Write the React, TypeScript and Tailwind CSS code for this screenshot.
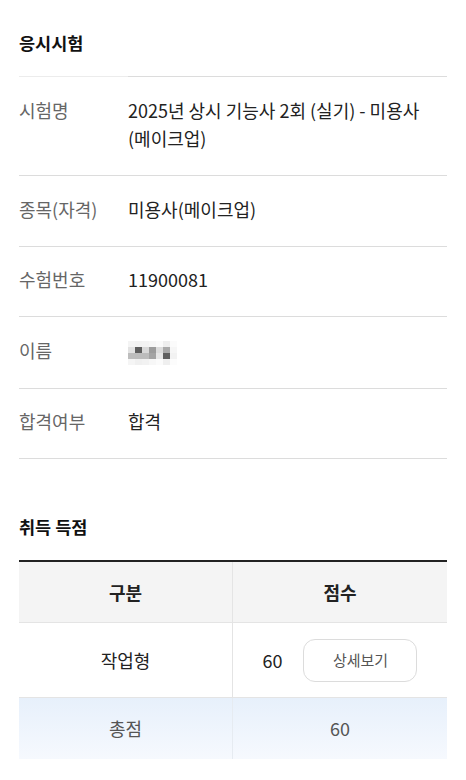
const font = { fontFamily: '"Noto Sans CJK KR", "Noto Sans", sans-serif' }

const rows: { label: string; value: React.ReactNode }[] = [
  { label: '시험명', value: '2025년 상시 기능사 2회 (실기) - 미용사(메이크업)' },
  { label: '종목(자격)', value: '미용사(메이크업)' },
  { label: '수험번호', value: '11900081' },
  { label: '이름', value: <BlurName /> },
  { label: '합격여부', value: '합격' },
]

function BlurName() {
  // pixelated (mosaic) name
  const cells = [
    ['#f4f4f4', '#f2f2f2', '#f3f3f3', '#f6f6f6', '#fafafa', '#eeeeee', '#fbfbfb'],
    ['#e2e2e2', '#5e5e5e', '#d8d8d8', '#9c9c9c', '#dcdcdc', '#a9a9a9', '#f6f6f6'],
    ['#bdbdbd', '#bcbcbc', '#bcbcbc', '#a4a4a4', '#e6e6e6', '#5f5f5f', '#f2f2f2'],
    ['#f5f5f5', '#f0f0f0', '#f2f2f2', '#f7f7f7', '#fbfbfb', '#efefef', '#fcfcfc'],
  ]
  return (
    <span className="inline-flex flex-col align-middle">
      {cells.map((r, i) => (
        <span key={i} className="flex">
          {r.map((c, j) => (
            <span key={j} className="w-[7px] h-[6px]" style={{ backgroundColor: c }} />
          ))}
        </span>
      ))}
    </span>
  )
}

export default function App() {
  return (
    <div className="min-h-screen bg-white px-[19px] pt-[31px] pb-5" style={font}>
      <h2 className="text-[17.5px] leading-6 font-bold text-[#111]">응시시험</h2>

      <div className="mt-[21px] flex">
        <div className="w-[109px] h-px bg-[#ececec]" />
        <div className="flex-1 h-px bg-[#dcdcdc]" />
      </div>
      {rows.map((r, i) => (
        <div
          key={r.label}
          className={
            'flex pb-[23px] border-b border-[#dcdcdc] text-[18px] leading-[28px] ' +
            (i === 0 ? 'pt-[19px]' : 'pt-[18.5px]')
          }
        >
          <div className="w-[109px] shrink-0 text-[#666]">{r.label}</div>
          <div className="flex-1 text-[#222] flex items-center min-h-[28px] break-keep">
            <span>{r.value}</span>
          </div>
        </div>
      ))}

      <h2 className="mt-[56px] text-[17.5px] leading-6 font-bold text-[#111]">취득 득점</h2>

      <div className="mt-[21px] border-t-2 border-[#222]">
        <div className="grid grid-cols-2 bg-[#f4f4f4] border-b border-[#e4e4e4] h-[61px] text-[18px] font-bold text-[#222]">
          <div className="flex items-center justify-center border-r border-[#e4e4e4]">구분</div>
          <div className="flex items-center justify-center">점수</div>
        </div>
        <div className="grid grid-cols-2 border-b border-[#e4e4e4] h-[75px] text-[18px] text-[#222]">
          <div className="flex items-center justify-center border-r border-[#e4e4e4]">작업형</div>
          <div className="flex items-center justify-center gap-[21px]">
            <span>60</span>
            <button className="w-[114px] h-[43px] rounded-[12px] border border-[#dcdcdc] bg-white text-[15px] text-[#555]">
              상세보기
            </button>
          </div>
        </div>
        <div className="grid grid-cols-2 h-[61px] text-[18px] text-[#555] bg-gradient-to-b from-[#e7f0fb] to-[#f6f9fe]">
          <div className="flex items-center justify-center border-r border-[#e6ebf1]">총점</div>
          <div className="flex items-center justify-center">60</div>
        </div>
      </div>
    </div>
  )
}
